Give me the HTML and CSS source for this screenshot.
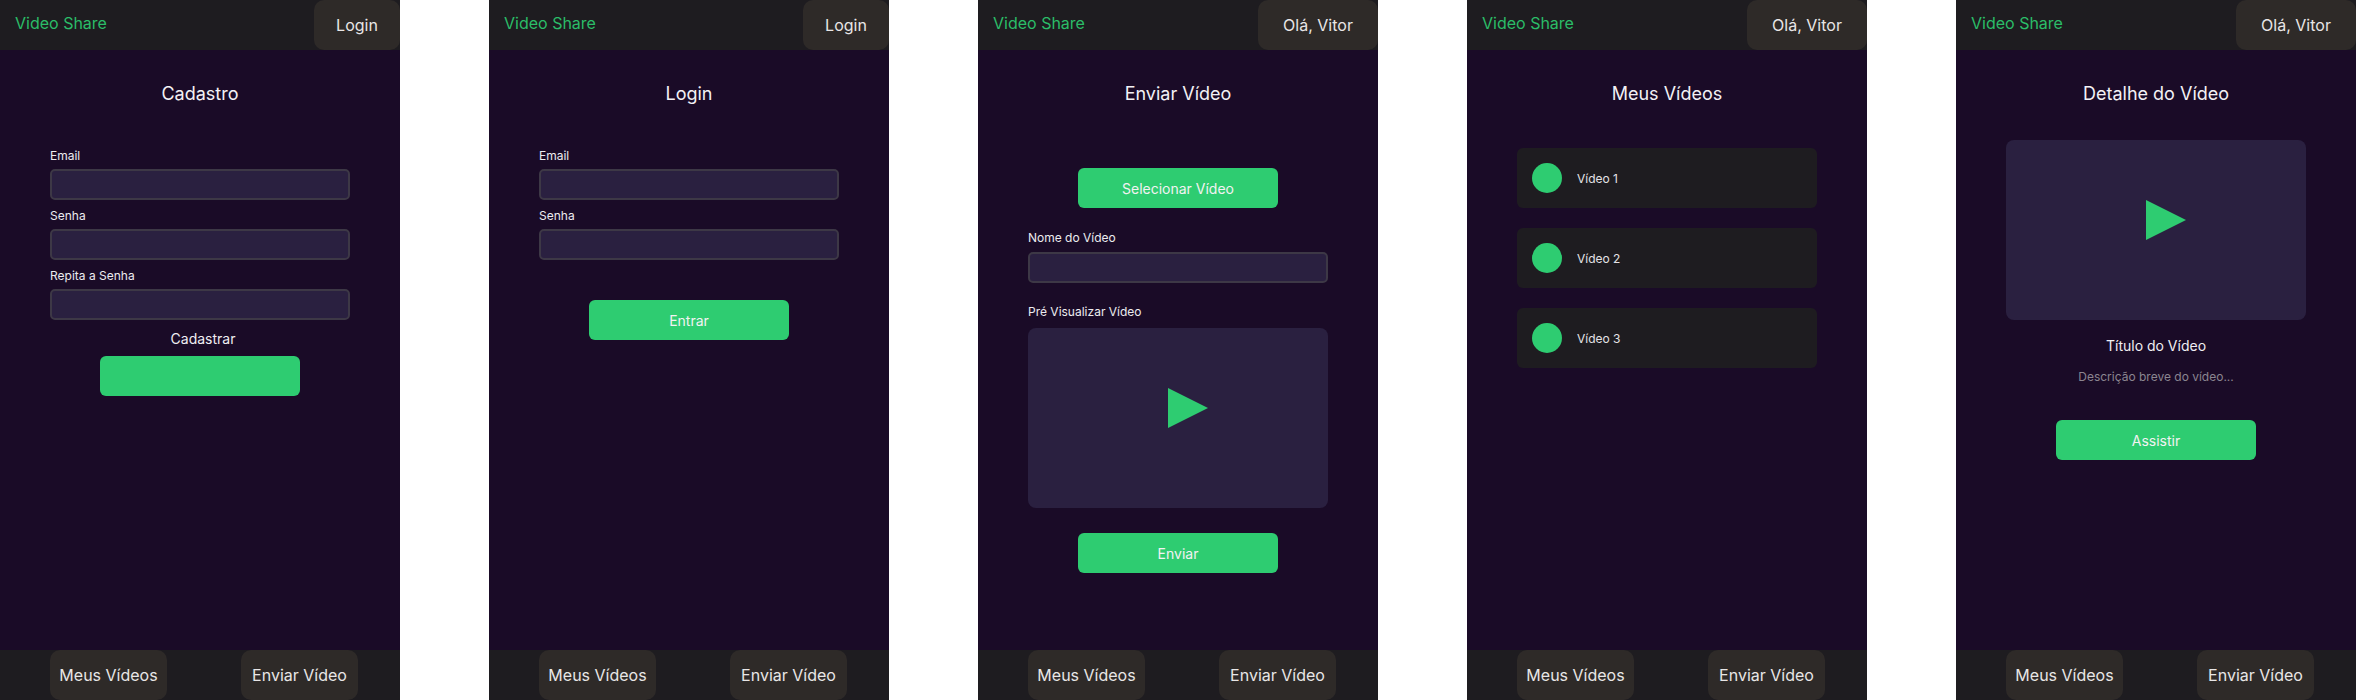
FILE: index.html
```html
<!DOCTYPE html>
<html lang="pt-BR">
<head>
<meta charset="utf-8">
<title>Video Share</title>
<link rel="stylesheet" href="styles.css">
</head>
<body>
<div class="board">

  <section class="screen">
    <header class="topbar"><span class="logo">Video Share</span><button class="nav-btn account">Login</button></header>
    <main class="content">
      <h1 class="title">Cadastro</h1>
      <form class="form">
        <label class="field"><span class="label">Email</span><input class="input" type="email"></label>
        <label class="field"><span class="label">Senha</span><input class="input" type="password"></label>
        <label class="field"><span class="label">Repita a Senha</span><input class="input" type="password"></label>
        <span class="submit-caption">Cadastrar</span>
        <button class="primary" type="button" aria-label="Cadastrar"></button>
      </form>
    </main>
    <footer class="bottombar"><button class="nav-btn">Meus Vídeos</button><button class="nav-btn">Enviar Vídeo</button></footer>
  </section>

  <section class="screen">
    <header class="topbar"><span class="logo">Video Share</span><button class="nav-btn account">Login</button></header>
    <main class="content">
      <h1 class="title">Login</h1>
      <form class="form">
        <label class="field"><span class="label">Email</span><input class="input" type="email"></label>
        <label class="field"><span class="label">Senha</span><input class="input" type="password"></label>
        <button class="primary login-submit" type="button">Entrar</button>
      </form>
    </main>
    <footer class="bottombar"><button class="nav-btn">Meus Vídeos</button><button class="nav-btn">Enviar Vídeo</button></footer>
  </section>

  <section class="screen">
    <header class="topbar"><span class="logo">Video Share</span><button class="nav-btn account user">Olá, Vitor</button></header>
    <main class="content">
      <h1 class="title">Enviar Vídeo</h1>
      <div class="upload">
        <button class="primary" type="button">Selecionar Vídeo</button>
        <label class="upload-field"><span class="label">Nome do Vídeo</span><input class="input" type="text"></label>
        <div class="upload-preview"><span class="label">Pré Visualizar Vídeo</span>
          <div class="preview">
            <svg class="play" width="40" height="40" viewBox="0 0 40 40"><polygon points="0,0 40,20 0,40"/></svg>
          </div>
        </div>
        <button class="primary send" type="button">Enviar</button>
      </div>
    </main>
    <footer class="bottombar"><button class="nav-btn">Meus Vídeos</button><button class="nav-btn">Enviar Vídeo</button></footer>
  </section>

  <section class="screen">
    <header class="topbar"><span class="logo">Video Share</span><button class="nav-btn account user">Olá, Vitor</button></header>
    <main class="content">
      <h1 class="title">Meus Vídeos</h1>
      <ul class="video-list">
        <li class="video-card"><span class="dot"></span><span class="video-name">Vídeo 1</span></li>
        <li class="video-card"><span class="dot"></span><span class="video-name">Vídeo 2</span></li>
        <li class="video-card"><span class="dot"></span><span class="video-name">Vídeo 3</span></li>
      </ul>
    </main>
    <footer class="bottombar"><button class="nav-btn">Meus Vídeos</button><button class="nav-btn">Enviar Vídeo</button></footer>
  </section>

  <section class="screen">
    <header class="topbar"><span class="logo">Video Share</span><button class="nav-btn account user">Olá, Vitor</button></header>
    <main class="content">
      <h1 class="title">Detalhe do Vídeo</h1>
      <div class="detail">
        <div class="preview">
          <svg class="play" width="40" height="40" viewBox="0 0 40 40"><polygon points="0,0 40,20 0,40"/></svg>
        </div>
        <h2 class="detail-title">Título do Vídeo</h2>
        <p class="detail-desc">Descrição breve do vídeo...</p>
        <button class="primary" type="button">Assistir</button>
      </div>
    </main>
    <footer class="bottombar"><button class="nav-btn">Meus Vídeos</button><button class="nav-btn">Enviar Vídeo</button></footer>
  </section>

</div>
</body>
</html>
```
FILE: styles.css
```css
* { box-sizing: border-box; }

html, body {
  margin: 0;
  padding: 0;
  background: #ffffff;
}

body {
  font-family: Inter, "Noto Sans", sans-serif;
  color: #f0eef2;
}

.board {
  display: flex;
  justify-content: space-between;
  width: 2356px;
  height: 700px;
}

.screen {
  display: flex;
  flex-direction: column;
  width: 400px;
  height: 700px;
  background: #1a0b27;
}

.topbar {
  display: flex;
  justify-content: space-between;
  flex: none;
  height: 50px;
  background: #1e1c20;
}

.logo {
  padding: 14px 0 0 15px;
  font-size: 16px;
  line-height: 19px;
  color: #2bbd68;
}

.nav-btn {
  height: 50px;
  padding: 0 9px;
  border: 0;
  border-radius: 10px;
  background: #2e2a28;
  color: #e8e6e6;
  font-family: inherit;
  font-size: 16px;
}

.account { width: 86px; }
.account.user { width: 120px; }

.bottombar {
  display: flex;
  justify-content: space-between;
  flex: none;
  height: 50px;
  padding: 0 42px 0 50px;
  background: #1e1c20;
}

.bottombar .nav-btn { width: 117px; padding: 0; }

.content {
  flex: 1;
  min-height: 0;
  padding: 33px 50px 0;
}

.title {
  margin: 0;
  font-size: 18px;
  font-weight: 400;
  line-height: 22px;
  text-align: center;
  color: #f3f1f5;
}

.form {
  display: flex;
  flex-direction: column;
  margin-top: 43px;
}

.field {
  display: flex;
  flex-direction: column;
  height: 60px;
}

.label {
  display: block;
  height: 21px;
  font-size: 12px;
  line-height: 15px;
  color: #ecebef;
}

.input {
  display: block;
  width: 100%;
  height: 31px;
  padding: 0;
  border: 2px solid #3d3846;
  border-radius: 5px;
  background: #2a2040;
}

.submit-caption {
  margin-top: 2px;
  margin-left: 6px;
  font-size: 14px;
  line-height: 17px;
  text-align: center;
}

.primary {
  display: block;
  flex: none;
  width: 200px;
  height: 40px;
  margin: 0 auto;
  border: 0;
  border-radius: 6px;
  background: #2ecc71;
  color: #f2f2f2;
  font-family: inherit;
  font-size: 14px;
}

.submit-caption + .primary { margin-top: 9px; }

.login-submit { margin-top: 32px; }

.upload {
  padding-top: 63px;
}

.upload-field {
  display: block;
  margin-top: 22px;
}

.upload-field .label { height: 22px; }

.upload-preview { margin-top: 21px; }

.upload-preview .label { height: 24px; }

.preview {
  height: 180px;
  padding: 60px 0 0 140px;
  border-radius: 8px;
  background: #2a2040;
}

.play {
  display: block;
  fill: #2ecc71;
}

.send { margin-top: 25px; }

.video-list {
  display: flex;
  flex-direction: column;
  gap: 20px;
  margin: 43px 0 0;
  padding: 0;
  list-style: none;
}

.video-card {
  display: flex;
  align-items: center;
  gap: 15px;
  height: 60px;
  padding: 0 15px;
  border-radius: 6px;
  background: #1e1c20;
}

.dot {
  width: 30px;
  height: 30px;
  border-radius: 50%;
  background: #2ecc71;
}

.video-name {
  font-size: 12px;
  color: #e4e2e6;
}

.detail { padding-top: 35px; }

.detail-title {
  margin: 17px 0 0;
  font-size: 14px;
  font-weight: 400;
  line-height: 17px;
  text-align: center;
}

.detail-desc {
  margin: 15px 0 0;
  font-size: 12px;
  line-height: 15px;
  text-align: center;
  color: #8b8590;
}

.detail-desc + .primary { margin-top: 36px; }
```
